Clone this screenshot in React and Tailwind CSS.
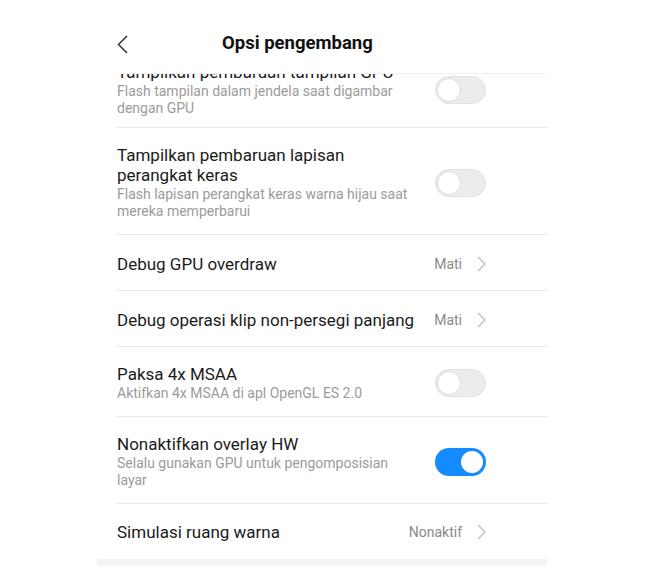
const rows = [
  {
    title: "Tampilkan pembaruan tampilan GPU",
    desc: "Flash tampilan dalam jendela saat digambar dengan GPU",
    toggle: false,
    clipped: true,
  },
  {
    title: "Tampilkan pembaruan lapisan perangkat keras",
    desc: "Flash lapisan perangkat keras warna hijau saat mereka memperbarui",
    toggle: false,
  },
  { title: "Debug GPU overdraw", value: "Mati" },
  { title: "Debug operasi klip non-persegi panjang", value: "Mati" },
  { title: "Paksa 4x MSAA", desc: "Aktifkan 4x MSAA di apl OpenGL ES 2.0", toggle: false },
  {
    title: "Nonaktifkan overlay HW",
    desc: "Selalu gunakan GPU untuk pengomposisian layar",
    toggle: true,
  },
  { title: "Simulasi ruang warna", value: "Nonaktif", last: true },
];

function Toggle({ on }) {
  if (on) {
    return (
      <div className="w-[51px] h-[28px] rounded-full bg-[#148bff] flex items-center justify-end pr-[3px]">
        <div className="w-[22px] h-[22px] rounded-full bg-white" />
      </div>
    );
  }
  return (
    <div className="w-[51px] h-[28px] rounded-full bg-[#ececec] border border-[#e2e2e2] flex items-center pl-[1px]">
      <div className="w-[24px] h-[24px] rounded-full bg-white border border-[#dcdcdc]" />
    </div>
  );
}

function Row({ row }) {
  const single = !row.desc;
  let pad = "pt-[17px] pb-[14px]";
  if (row.clipped) pad = "-mt-[29px] pt-[17px] pb-[10px]";
  if (single) pad = row.last ? "h-[55px] pt-[1px]" : "h-[56px] pt-[3px]";
  return (
    <div
      className={`flex items-center pr-[61px] ${row.last ? "" : "border-b border-[#e9e9e9]"} ${pad}`}
    >
      <div className="w-[302px]">
        <div className="text-[17px] leading-[20px] text-[#1b1b1b]">{row.title}</div>
        {row.desc && (
          <div className="text-[14px] leading-[17px] text-[#9b9b9b] mt-[1px]">{row.desc}</div>
        )}
      </div>
      <div className="flex-1 flex justify-end items-center">
        {row.value ? (
          <div className="flex items-center gap-[15px]">
            <span className="text-[14px] text-[#8a8a8a]">{row.value}</span>
            <svg width="9" height="16" viewBox="0 0 9 16" fill="none">
              <polyline points="1,1 8,8 1,15" stroke="#bcbcbc" strokeWidth="1.3" />
            </svg>
          </div>
        ) : (
          <Toggle on={row.toggle} />
        )}
      </div>
    </div>
  );
}

export default function App() {
  return (
    <div className="w-full h-[584px] bg-white" style={{ fontFamily: "Roboto, 'Noto Sans', sans-serif" }}>
      <div className="ml-[97px] w-[450px]">
        <div className="h-[73px] flex items-center pl-[20px] pt-[15px] relative z-10 bg-white">
          <svg width="11" height="19" viewBox="0 0 11 19" fill="none">
            <polyline points="10,1 1.5,9.5 10,18" stroke="#333" strokeWidth="1.5" />
          </svg>
          <div className="ml-[94px] text-[18.5px] font-bold text-[#111] -mt-[1px]">Opsi pengembang</div>
        </div>
        <div className="ml-[20px] border-t border-[#f0f0f0] overflow-hidden">
          {rows.map((r) => (
            <Row key={r.title} row={r} />
          ))}
        </div>
        <div className="h-[7px] bg-[#f4f4f4]" />
      </div>
    </div>
  );
}
